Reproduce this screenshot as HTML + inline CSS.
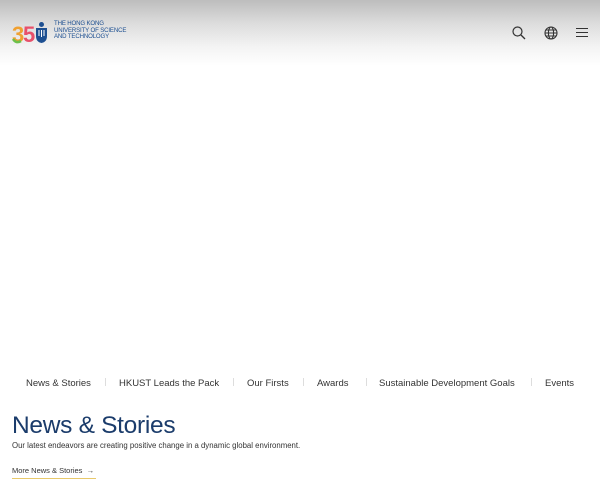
<!DOCTYPE html>
<html><head><style>
*{margin:0;padding:0;box-sizing:border-box}
body{width:600px;height:480px;overflow:hidden;background:#fff;font-family:"Liberation Sans",sans-serif;position:relative}
.hdr{position:absolute;left:0;top:0;width:600px;height:66px;background:linear-gradient(#bdbdbd 0%,#dcdcdc 35%,#f3f3f3 70%,#fff 100%)}
.logo{position:absolute;left:12px;top:21px}
.lt{position:absolute;left:54px;top:21px;font-size:6.1px;line-height:6.6px;color:#1d4f91;letter-spacing:-0.15px}
.nav{position:absolute;top:378px;font-size:9.5px;color:#333;white-space:nowrap}
.sep{position:absolute;top:378px;width:1px;height:8px;background:#ddd}
h1{position:absolute;left:12px;top:412px;font-size:24.5px;font-weight:normal;color:#1b3c6b;letter-spacing:-0.3px}
.sub{position:absolute;left:12px;top:441px;font-size:7.8px;color:#333}
.more{position:absolute;left:12px;top:466px;font-size:7.5px;color:#333;padding-bottom:3px;border-bottom:1px solid #e8c96a;width:84px;white-space:nowrap}
</style></head><body>
<div class="hdr"></div>
<svg class="logo" width="40" height="24" viewBox="0 0 40 24">
<text x="0" y="21" font-family="Liberation Sans" font-weight="bold" font-size="22" fill="#f0a030">3</text>
<text x="11" y="21" font-family="Liberation Sans" font-weight="bold" font-size="22" fill="#e8506a">5</text>
<path d="M1 18 q3 5 8 2" stroke="#6cc04a" stroke-width="2.5" fill="none"/>
<rect x="27" y="1" width="5" height="5" rx="2.5" fill="#1d4f91"/>
<path d="M24 7h11v8q0 6-5.5 7q-5.5-1-5.5-7z" fill="#1d4f91"/>
<path d="M27 9v6M29.5 9v7M32 9v6" stroke="#fff" stroke-width="1"/>
</svg>
<div class="lt">THE HONG KONG<br>UNIVERSITY OF SCIENCE<br>AND TECHNOLOGY</div>
<svg style="position:absolute;left:512px;top:26px" width="14" height="14" viewBox="0 0 14 14"><circle cx="5.5" cy="5.5" r="4.5" stroke="#333" stroke-width="1.2" fill="none"/><path d="M9 9l4 4" stroke="#333" stroke-width="1.3"/></svg>
<svg style="position:absolute;left:544px;top:26px" width="14" height="14" viewBox="0 0 14 14" fill="none" stroke="#333" stroke-width="1.1"><circle cx="7" cy="7" r="6"/><ellipse cx="7" cy="7" rx="2.6" ry="6"/><path d="M1 7h12M2 4h10M2 10h10"/></svg>
<svg style="position:absolute;left:576px;top:27px" width="12" height="11" viewBox="0 0 12 11" stroke="#333" stroke-width="1.1"><path d="M0 1.5h12M0 5.5h12M0 9.5h12"/></svg>
<div class="nav" style="left:26px">News &amp; Stories</div>
<div class="sep" style="left:105px"></div>
<div class="nav" style="left:119px">HKUST Leads the Pack</div>
<div class="sep" style="left:233px"></div>
<div class="nav" style="left:247px">Our Firsts</div>
<div class="sep" style="left:303px"></div>
<div class="nav" style="left:317px">Awards</div>
<div class="sep" style="left:366px"></div>
<div class="nav" style="left:379px">Sustainable Development Goals</div>
<div class="sep" style="left:531px"></div>
<div class="nav" style="left:545px">Events</div>
<h1>News &amp; Stories</h1>
<div class="sub">Our latest endeavors are creating positive change in a dynamic global environment.</div>
<div class="more">More News &amp; Stories &nbsp;&rarr;</div>
</body></html>
